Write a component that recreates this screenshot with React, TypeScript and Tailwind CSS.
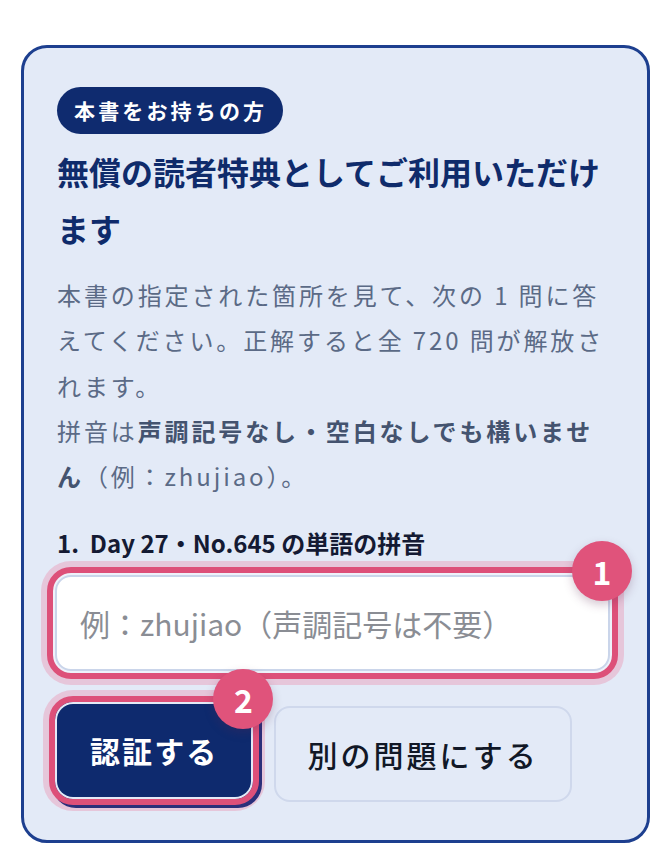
export default function App() {
  return (
    <div className="min-h-screen bg-white pt-[45px] pl-[21px] pr-[20px] font-['Noto_Sans_CJK_JP','Noto_Sans',sans-serif]">
      <div className="rounded-[26px] border-[3px] border-[#1d3f8f] bg-[#e3eaf7] pl-[33px] pr-[33px] pt-[39px] pb-[38px]">
        <span className="inline-flex h-[47px] items-center rounded-full bg-[#0f2b6f] pl-[17px] pr-[16px] text-[21px] font-bold tracking-[0.15em] text-white">
          本書をお持ちの方
        </span>

        <h2 className="mt-[9px] text-[32px] font-bold leading-[57px] text-[#0f2b6b]">
          無償の読者特典としてご利用いただけます
        </h2>

        <p className="mt-[15px] text-[24px] leading-[45.3px] tracking-[0.12em] text-[#5b6a86]">
          本書の指定された箇所を見て、次の 1 問に答えてください。正解すると全 720 問が解放されます。
          <br />
          拼音は<strong className="font-bold text-[#44536f]">声調記号なし・空白なしでも構いません</strong>（例：zhujiao）。
        </p>

        <label className="mt-[29px] block text-[24px] font-bold leading-[32px] text-[#141a33]">
          1.&nbsp; Day 27・No.645 の単語の拼音
        </label>

        <div className="relative mt-[16px] -ml-[2px] mr-[4px]">
          <input
            className="block h-[96px] w-full rounded-[16px] border-2 border-[#cad5ea] bg-white pl-[23px] text-[30px] text-[#333] outline-[6px] outline-solid outline-[#dd5079] outline-offset-[2px] shadow-[0_0_0_2px_#eef2fa,0_0_0_14px_#e6c6da] placeholder:text-[#8a8d94]"
            placeholder="例：zhujiao（声調記号は不要）"
          />
          <span className="absolute -right-[22px] -top-[34px] flex h-[60px] w-[60px] items-center justify-center rounded-full bg-[#e0537b] text-[32px] font-bold text-white shadow-[0_4px_10px_rgba(90,40,80,0.25)]">
            1
          </span>
        </div>

        <div className="mt-[33px] flex items-start gap-[23px]">
          <div className="relative">
            <button className="flex h-[93px] items-center rounded-[16px] bg-[#0e2a6e] px-[33px] text-[30px] font-bold tracking-[0.07em] text-white outline-[6px] outline-solid outline-[#dd5079] outline-offset-[2px] shadow-[0_0_0_2px_#e3eaf7,3px_3px_0_8px_#2b2f7a,0_0_0_14px_#e6c6da]">
              認証する
            </button>
            <span className="absolute -right-[22px] -top-[35px] flex h-[60px] w-[60px] items-center justify-center rounded-full bg-[#e0537b] text-[32px] font-bold text-white shadow-[0_4px_10px_rgba(90,40,80,0.25)]">
              2
            </span>
          </div>
          <button className="mt-[2px] flex h-[96px] items-center rounded-[16px] border-2 border-[#cfd8ec] bg-[#e3eaf7] px-[31px] text-[30px] font-medium tracking-[0.1em] text-[#111827]">
            別の問題にする
          </button>
        </div>
      </div>
    </div>
  );
}
